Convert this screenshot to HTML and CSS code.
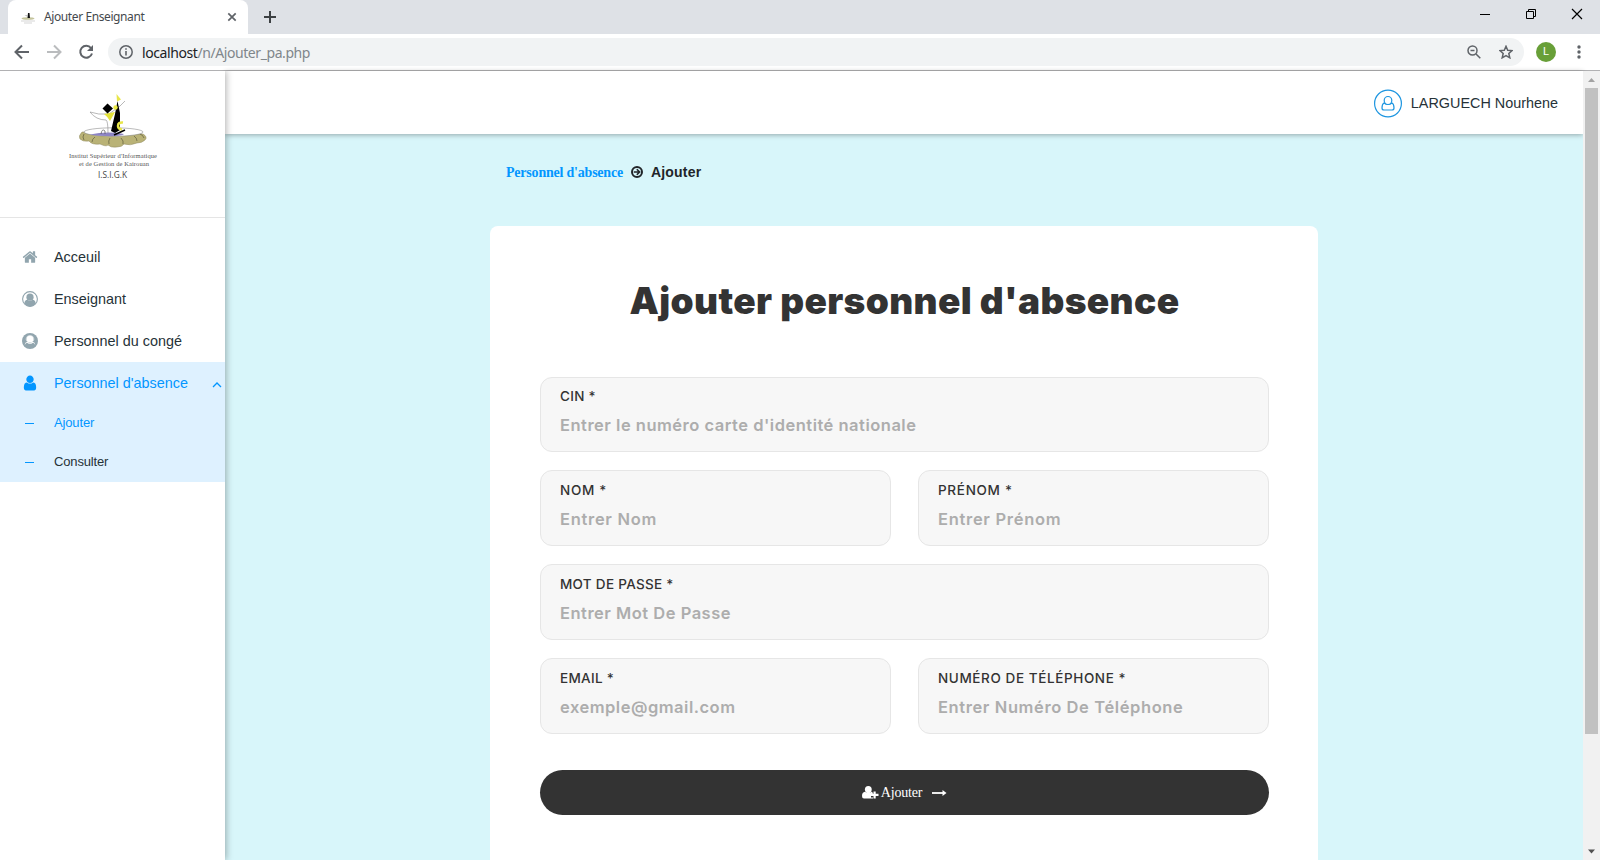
FILE: index.html
```html
<!DOCTYPE html>
<html lang="fr">
<head>
<meta charset="utf-8">
<title>Ajouter Enseignant</title>
<link rel="stylesheet" href="styles.css">
</head>
<body>
<div class="tabstrip">
  <div class="tab">
    <svg class="favicon" width="16" height="16" viewBox="0 0 16 16"><ellipse cx="8" cy="9.500" rx="6.500" ry="1.300" fill="#c4c49c"/><path d="M8 4l1.500 0L10 9H7.500z" fill="#111"/><path d="M4.500 6.500h3v1z" fill="#888"/><path d="M1 12h14M4 14h8" stroke="#d5d5d5"/></svg>
    <span class="tab-title">Ajouter Enseignant</span>
    <svg class="tab-close" width="10" height="10" viewBox="0 0 10 10"><path d="M1.300 1.300l7.400 7.400M8.700 1.300l-7.400 7.400" stroke="#5f6368" stroke-width="1.700"/></svg>
  </div>
  <svg class="new-tab" width="12" height="12" viewBox="0 0 12 12"><path d="M6 0v12M0 6h12" stroke="#3c4043" stroke-width="2"/></svg>
  <div class="window-controls">
    <svg width="12" height="12" viewBox="0 0 12 12"><path d="M1 6.500h10" stroke="#000"/></svg>
    <svg width="12" height="12" viewBox="0 0 12 12"><path d="M1.500 3.500h7v7h-7zM3.500 3.500v-2h7v7h-2" fill="none" stroke="#000"/></svg>
    <svg width="12" height="12" viewBox="0 0 12 12"><path d="M1 1l10 10M11 1L1 11" stroke="#000" stroke-width="1.200"/></svg>
  </div>
</div>
<div class="toolbar">
  <svg width="16" height="16" viewBox="0 0 16 16"><path d="M15 8H2M8 1.500L1.500 8 8 14.500" fill="none" stroke="#5f6368" stroke-width="2"/></svg>
  <svg width="16" height="16" viewBox="0 0 16 16"><path d="M1 8h13M8 1.500L14.500 8 8 14.500" fill="none" stroke="#babcbe" stroke-width="2"/></svg>
  <svg width="16" height="16" viewBox="0 0 16 16"><path d="M13 4A6 6 0 1 0 14 9.500" fill="none" stroke="#5f6368" stroke-width="2"/><path d="M15 1v6H9z" fill="#5f6368"/></svg>
  <div class="omnibox">
    <svg width="14" height="14" viewBox="0 0 14 14"><circle cx="7" cy="7" r="6.200" fill="none" stroke="#5f6368" stroke-width="1.500"/><path d="M7 6v4.500M7 3.200v1.600" stroke="#5f6368" stroke-width="1.600"/></svg>
    <span class="url"><b>localhost</b>/n/Ajouter_pa.php</span>
    <svg class="zoom-icon" width="14" height="14" viewBox="0 0 14 14"><circle cx="5.500" cy="5.500" r="4.500" fill="none" stroke="#5f6368" stroke-width="1.500"/><path d="M9 9l4.300 4.300M3.500 5.500h4" stroke="#5f6368" stroke-width="1.500"/></svg>
    <svg width="14" height="14" viewBox="0 0 14 14"><path d="M7 1.300l1.700 3.900 4.300.4-3.200 2.900 1 4.300L7 10.600l-3.800 2.200 1-4.300L1 5.600l4.300-.4z" fill="none" stroke="#5f6368" stroke-width="1.500"/></svg>
  </div>
  <div class="avatar">L</div>
  <svg class="kebab" width="4" height="14" viewBox="0 0 4 14"><g fill="#5f6368"><circle cx="2" cy="2" r="1.700"/><circle cx="2" cy="7" r="1.700"/><circle cx="2" cy="12" r="1.700"/></g></svg>
</div>
<div class="app">
  <aside class="sidebar">
    <div class="brand">
      <svg width="94" height="92" viewBox="66 90 94 92">
        <path d="M82 132q-4 4-2 7 3 3 9 2 3 4 11 3 6 3 8 1 3 3 9 2 5 0 7-3 6 2 13-1 5 0 8-3 3-3-2-6l-28-1z" fill="#b9b276" stroke="#8d875c" stroke-width=".5"/>
        <path d="M84 134q-2 3 0 6M95 137q-3 2-3 5M110 138q-2 3-1 6M121 138q3 3 2 6M134 136q3 2 3 5M140 134q3 1 4 4" fill="none" stroke="#5f5b3e" stroke-width=".7"/>
        <ellipse cx="113.500" cy="132" rx="29.500" ry="4.200" fill="#fff" stroke="#777" stroke-width=".5"/>
        <path d="M90 134.500q17-3.500 34-.5-2 2-12 2.200-14 0-22-1.700z" fill="#8d84c4"/>
        <path d="M90 112q8 3 19 2l11-8 5-5" fill="none" stroke="#888" stroke-width=".6"/>
        <path d="M90 112q6 8 16 8 2 1 2 13" fill="none" stroke="#888" stroke-width=".6"/>
        <path d="M104 114l11-2-5 9q-2-4-6-7z" fill="#e3e13a"/>
        <path d="M102.500 108.500l5-5 5.500 5-5.500 5z"/>
        <path d="M117.500 101l2.500 12v17l-5 3-4-2 4-17z"/>
        <path d="M116.500 94l4.500 5.500-4 2z" fill="#e8e64a"/>
        <circle cx="115.500" cy="107.500" r="2.200" fill="#eceb43"/>
        <path d="M123 122.500q-5-.5-5 3.500 0 3 4 3.500" fill="none" stroke="#e8e64a" stroke-width="2.500"/>
        <path d="M114 135l11-5" stroke="#000" stroke-width="1.500"/>
        <path d="M101 134q1-6 4-3v3" fill="none" stroke="#555" stroke-width=".7"/>
        <g class="brand-text"><text x="69" y="157.500" textLength="88">Institut Supérieur d'Informatique</text><text x="79" y="165.500" textLength="70">et de Gestion de Kairouan</text></g>
        <text class="brand-acronym" x="98" y="177.700" textLength="29" lengthAdjust="spacingAndGlyphs">I.S.I.G.K</text>
      </svg>
    </div>
    <nav class="menu">
      <a class="item"><svg width="16" height="16" viewBox="0 0 1792 1792"><path d="M1472 992v480q0 26-19 45t-45 19h-384v-384h-256v384h-384q-26 0-45-19t-19-45v-480q0-1 .5-3t.5-3l575-474 575 474q1 2 1 6zm223-69l-62 74q-8 9-21 11h-3q-13 0-21-7l-692-577-692 577q-12 8-24 7-13-2-21-11l-62-74q-8-10-7-23.500t11-21.500l719-599q32-26 76-26t76 26l244 204v-195q0-14 9-23t23-9h192q14 0 23 9t9 23v408l219 182q10 8 11 21.500t-7 23.500z"/></svg><span>Acceuil</span></a>
      <a class="item"><svg width="16" height="16" viewBox="0 0 16 16"><circle cx="8" cy="8" r="7.400" fill="none" stroke="#91a5ae" stroke-width="1.100"/><circle cx="8" cy="6.200" r="3.600"/><path d="M2.300 12.300q.5-3.300 3-3.500 2.700 1.700 5.400 0 2.500.2 3 3.500Q11.500 15.500 8 15.500t-5.700-3.200z"/></svg><span>Enseignant</span></a>
      <a class="item"><svg width="16" height="16" viewBox="0 0 16 16"><circle cx="8" cy="8" r="8"/><g fill="#fff"><circle cx="8" cy="6.200" r="3.400"/><path d="M2.600 11.900q.4-2.900 2.800-3.100 2.600 1.900 5.200 0 2.400.2 2.800 3.100Q11.500 9.500 10.600 9.900 8 11.700 5.400 9.900 4.500 9.500 2.600 11.900z"/></g><path d="M4.900 8.300A3.900 3.900 0 0 1 4.300 5 3.900 3.900 0 0 1 11.700 5 3.900 3.900 0 0 1 11.100 8.300" fill="none" stroke="#fff" stroke-width=".5"/></svg><span>Personnel du congé</span></a>
      <div class="group">
        <a class="item active"><svg width="16" height="16" viewBox="64 64 1664 1664"><path d="M1536 1399q0 109-62.500 187t-150.500 78h-854q-88 0-150.500-78t-62.500-187q0-85 8.500-160.500t31.500-152 58.500-131 94-89 134.500-34.500q131 128 313 128t313-128q76 0 134.500 34.500t94 89 58.500 131 31.500 152 8.500 160.500zm-256-887q0 159-112.500 271.500t-271.500 112.500-271.500-112.500-112.500-271.500 112.500-271.500 271.500-112.500 271.500 112.500 112.500 271.500z"/></svg><span>Personnel d'absence</span><svg class="caret" width="10" height="6" viewBox="0 0 10 6"><path d="M1 5l4-4 4 4" fill="none" stroke="#0396ff" stroke-width="1.300"/></svg></a>
        <a class="sub active"><i></i><span>Ajouter</span></a>
        <a class="sub"><i></i><span>Consulter</span></a>
      </div>
    </nav>
  </aside>
  <div class="main">
    <header class="topbar">
      <svg width="28" height="29" viewBox="0 0 28 29"><circle cx="14" cy="14.500" r="13.400" fill="none" stroke="#1c95e0" stroke-width="1.200"/><g fill="#fff" stroke="#1c95e0" stroke-width="1.200"><path d="M10 14q-2 1-2 5 0 2 2 2h8q2 0 2-2 0-4-2-5-4 3-8 0z"/><ellipse cx="14" cy="11.500" rx="3.800" ry="4"/></g></svg>
      <span>LARGUECH Nourhene</span>
    </header>
    <div class="content">
      <div class="crumbs">
        <a>Personnel d'absence</a>
        <svg width="12" height="12" viewBox="0 0 12 12"><circle cx="6" cy="6" r="5" fill="none" stroke="#212529" stroke-width="2"/><path d="M2.800 6h5M5.800 3.200L8.600 6 5.800 8.800" fill="none" stroke="#212529" stroke-width="1.600"/></svg>
        <strong>Ajouter</strong>
      </div>
      <form class="card">
        <h1><span>Ajouter personnel d'absence</span></h1>
        <div class="fields">
          <label class="field wide first"><span class="label">CIN *</span><span class="hint">Entrer le numéro carte d'identité nationale</span></label>
          <label class="field short"><span class="label">NOM *</span><span class="hint">Entrer Nom</span></label>
          <label class="field short"><span class="label">PRÉNOM *</span><span class="hint">Entrer Prénom</span></label>
          <label class="field wide"><span class="label">MOT DE PASSE *</span><span class="hint">Entrer Mot De Passe</span></label>
          <label class="field"><span class="label">EMAIL *</span><span class="hint">exemple@gmail.com</span></label>
          <label class="field loose"><span class="label">NUMÉRO DE TÉLÉPHONE *</span><span class="hint">Entrer Numéro De Téléphone</span></label>
        </div>
        <div class="submit">
          <svg width="17" height="13" viewBox="0 0 17 13"><g fill="#fff"><ellipse cx="6.300" cy="3.600" rx="3.400" ry="3.600"/><path d="M0 10q0-4 3-4.300 3.300 2.500 6.600 0l1.200 1v2.300H9v2.500h2V12.500H2Q0 12.500 0 10z"/><path d="M11.500 5.500h2.200v2.300h2.800V10h-2.800v2.500h-2.200V10H9V7.800h2.500z"/></g></svg>
          <span>Ajouter</span>
          <svg class="arrow" width="15" height="8" viewBox="0 0 15 8"><path d="M0 4h12" stroke="#fff" stroke-width="1.800"/><path d="M10.500 1L14.500 4l-4 3z" fill="#fff"/></svg>
        </div>
      </form>
    </div>
  </div>
  <div class="scrollbar">
    <svg width="17" height="17" viewBox="0 0 17 17"><path d="M5 11l3.500-4 3.500 4z" fill="#a3a3a3"/></svg>
    <div class="thumb"></div>
    <svg class="down" width="17" height="17" viewBox="0 0 17 17"><path d="M5 6.500h7L8.500 10.500z" fill="#505050"/></svg>
  </div>
</div>
</body>
</html>
```
FILE: styles.css
```css
* { box-sizing: border-box; }
body { margin: 0; width: 1600px; height: 860px; overflow: hidden; display: flex; flex-direction: column; background: #fff; font-family: "Liberation Sans", Arial, sans-serif; }
svg { display: block; flex: none; }
span, a, strong { white-space: nowrap; }

.tabstrip { height: 34px; flex: none; display: flex; background: #dee1e6; padding-left: 8px; }
.tab { width: 240px; background: #fff; border-radius: 8px 8px 0 0; display: flex; align-items: center; padding: 0 11px 0 12px; font: 12px "Noto Sans", sans-serif; color: #45494d; }
.tab-title { margin-left: 8px; padding-bottom: 1px; letter-spacing: -0.4px; }
.tab-close { margin-left: auto; }
.new-tab { margin: 11px 0 0 16px; }
.window-controls { display: flex; gap: 34px; margin: 8px 17px 0 auto; }

.toolbar { height: 37px; flex: none; display: flex; align-items: center; padding-left: 14px; border-bottom: 1px solid #b1b1b3; }
.toolbar > svg { margin-right: 16px; }
.omnibox { flex: 1; height: 28px; margin-left: -2px; border-radius: 14px; background: #f1f3f4; display: flex; align-items: center; padding: 0 11px; }
.url { margin-left: 9px; font: 14px "Noto Sans", sans-serif; letter-spacing: -0.42px; color: #80868b; }
.url b { font-weight: 400; color: #202124; }
.zoom-icon { margin: 0 18px 0 auto; }
.avatar { width: 20px; height: 20px; margin: 0 21px 0 12px; border-radius: 50%; background: #689f38; color: #fff; font: 11px/20px Roboto, sans-serif; text-align: center; }
.toolbar > .kebab { margin-right: 19px; }

.app { flex: 1; min-height: 0; display: flex; }
.sidebar { width: 225px; flex: none; background: #fff; box-shadow: 1px 0 7px rgba(0, 0, 0, .32); z-index: 2; clip-path: inset(0 -12px 0 0); }
.brand { height: 147px; border-bottom: 1px solid #e5e5e5; padding: 19px 0 0 66px; }
.brand-text { font: 6.500px "Liberation Serif", serif; fill: #555; }
.brand-acronym { font: 8.500px "Open Sans", sans-serif; fill: #444; }
.menu { padding-top: 18px; }
.item, .sub { display: flex; align-items: center; height: 42px; padding-left: 22px; font-size: 14.400px; color: #263238; }
.item svg { fill: #91a5ae; }
.item span, .sub span { margin-left: 16px; }
.group { background: #def1ff; }
.active, .item.active { color: #0396ff; }
.item.active svg { fill: #0396ff; }
.item .caret { margin: 3px 3px 0 auto; }
.sub { height: 39px; padding-bottom: 2px; font-size: 13px; letter-spacing: -0.15px; }
.sub i { width: 9px; height: 1px; margin: 1px 4px 0 3px; background: #0396ff; }

.main { flex: 1; min-width: 0; display: flex; flex-direction: column; background: #d8f6fa; }
.topbar { height: 63px; flex: none; background: #fff; display: flex; align-items: center; justify-content: flex-end; gap: 9px; padding: 1px 25px 0 0; box-shadow: 0 1px 5px rgba(0, 0, 0, .32); font-size: 14.400px; color: #263238; }
.content { flex: 1; min-height: 0; padding: 0 265px; overflow: hidden; }
.crumbs { height: 92px; padding: 0 0 16px 16px; display: flex; align-items: center; font-size: 14px; color: #212529; }
.crumbs a { padding-top: 1px; font: bold 14px "Liberation Serif", serif; letter-spacing: -0.21px; color: #0396ff; }
.crumbs svg { margin: 0 8px; }
.crumbs strong { letter-spacing: 0.2px; }
.card { height: 700px; background: #fff; border-radius: 8px; padding: 50px 49px 0 50px; }
h1 { margin: 0; height: 101px; display: flex; justify-content: center; font: 900 37px/50px Inter, sans-serif; letter-spacing: 0.35px; color: #333; }
.fields { display: grid; grid-template-columns: 1fr 1fr; gap: 18px 27px; }
.field { height: 76px; border: 1px solid #e6e6e6; border-radius: 12px; background: #f7f7f7; padding: 8px 19px; display: flex; flex-direction: column; font-family: Inter, sans-serif; }
.wide { grid-column: span 2; }
.first { height: 75px; padding-top: 7px; }
.label { font-size: 13.500px; line-height: 22px; font-weight: 500; letter-spacing: 0.3px; color: #333; }
.hint { margin-top: 6px; font-size: 16.500px; line-height: 24px; font-weight: 600; letter-spacing: 0.5px; color: #adadad; }
.loose .label, .loose .hint { letter-spacing: 0.6px; }
.short .label, .short .hint { letter-spacing: 0.7px; }
.submit { height: 45px; margin-top: 36px; border-radius: 23px; background: #333; color: #fff; display: flex; align-items: center; justify-content: center; font: 14px "Liberation Serif", serif; }
.submit span { margin: 0 10px 0 2px; letter-spacing: -0.2px; }

.scrollbar { width: 17px; flex: none; background: #f1f1f1; display: flex; flex-direction: column; }
.thumb { width: 13px; height: 646px; margin-left: 2px; background: #c1c1c1; }
.down { margin-top: auto; }
```
